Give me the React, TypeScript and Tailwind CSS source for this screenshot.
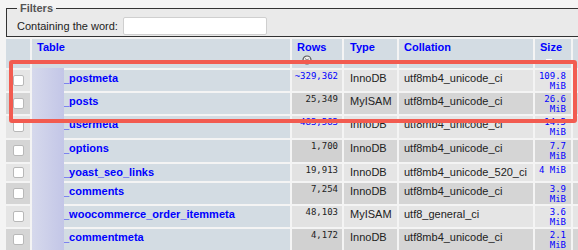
import React from 'react';

type Row = {
  name: string;
  rows: string;
  approx?: boolean;
  type: string;
  collation: string;
  size: string[];
  h: string;
};

const ROWS: Row[] = [
  { name: '_postmeta', rows: '~329,362', approx: true, type: 'InnoDB', collation: 'utf8mb4_unicode_ci', size: ['109.8', 'MiB'], h: 'h-[21px]' },
  { name: '_posts', rows: '25,349', type: 'MyISAM', collation: 'utf8mb4_unicode_ci', size: ['26.6', 'MiB'], h: 'h-[21px]' },
  { name: '_usermeta', rows: '~483,583', approx: true, type: 'InnoDB', collation: 'utf8mb4_unicode_ci', size: ['14.5', 'MiB'], h: 'h-[22px]' },
  { name: '_options', rows: '1,700', type: 'InnoDB', collation: 'utf8mb4_unicode_ci', size: ['7.7', 'MiB'], h: 'h-[22px]' },
  { name: '_yoast_seo_links', rows: '19,913', type: 'InnoDB', collation: 'utf8mb4_unicode_520_ci', size: ['4 MiB'], h: 'h-[17px]' },
  { name: '_comments', rows: '7,254', type: 'InnoDB', collation: 'utf8mb4_unicode_ci', size: ['3.9', 'MiB'], h: 'h-[21px]' },
  { name: '_woocommerce_order_itemmeta', rows: '48,103', type: 'MyISAM', collation: 'utf8_general_ci', size: ['3.6', 'MiB'], h: 'h-[21px]' },
  { name: '_commentmeta', rows: '4,172', type: 'InnoDB', collation: 'utf8mb4_unicode_ci', size: ['2.1', 'MiB'], h: 'h-[21px]' },
];

const SortIcon = () => (
  <svg className="block w-[10px] h-[10px]" viewBox="0 0 10 10">
    <circle cx="5" cy="5" r="4" fill="#f2f2f2" stroke="#555" strokeWidth="1.2" />
    <path d="M3.2 3.6 L5 5.4 L6.8 3.6 M3.2 5.6 L5 7.4 L6.8 5.6" fill="none" stroke="#555" strokeWidth="1" />
  </svg>
);

const mono = "font-['DejaVu_Sans_Mono','Liberation_Mono',monospace] text-[9px] leading-[10px]";

export default function App() {
  return (
    <div className="relative w-[578px] h-[250px] overflow-hidden bg-[#f4f4f4] font-['Liberation_Sans',Arial,sans-serif] text-[11px] leading-[13px] text-[#222]">
      {/* filter box */}
      <fieldset className="mt-[2px] ml-[6px] w-[640px] border border-[#333] bg-[#eaeaea] px-[10px] pt-[2px] pb-[1px]">
        <legend className="px-[3px] font-bold text-[#555]">Filters</legend>
        <div className="flex items-center gap-[5px]">
          <span>Containing the word:</span>
          <span className="block w-[144px] h-[18px] bg-white border border-[#cfcfcf] rounded-[2px]" />
        </div>
      </fieldset>

      {/* tables list */}
      <table className="ml-[4px] w-[612px] table-fixed border-separate border-spacing-[2px]">
        <colgroup>
          <col className="w-[24px]" />
          <col className="w-[258px]" />
          <col className="w-[50px]" />
          <col className="w-[53px]" />
          <col className="w-[134px]" />
          <col className="w-[36px]" />
          <col className="w-[43px]" />
        </colgroup>
        <thead>
          <tr className="bg-[#d3dce3] text-[#0000ff] font-bold align-top text-left">
            <th className="h-[29px] p-0" />
            <th className="px-[5px] pt-[2px]">Table</th>
            <th className="px-[5px] pt-[2px]">
              Rows
              <div className="ml-[5px] mt-[1px]"><SortIcon /></div>
            </th>
            <th className="px-[6px] pt-[2px]">Type</th>
            <th className="px-[5px] pt-[2px]">Collation</th>
            <th className="px-[5px] pt-[2px]">
              Size
              <div className="ml-[6px] mt-[5px] w-[6px] h-[3px] bg-white" />
            </th>
            <th />
          </tr>
        </thead>
        <tbody>
          {ROWS.map((r, i) => {
            const odd = i % 2 === 0;
            const bg = odd ? 'bg-[#e5e5e5]' : 'bg-[#d5d5d5]';
            return (
              <tr key={r.name} className="align-top">
                <td className={`${bg} ${r.h} p-0 align-middle`}>
                  <span className="block mx-auto -mt-[1px] w-[11px] h-[11px] bg-white border border-[#b8b8b8] rounded-[2px]" />
                </td>
                <th className={`${r.h} bg-[#d3dce3] pl-[31px] pt-[2px] text-left font-bold text-[#0000ff] whitespace-nowrap`}>
                  {r.name}
                </th>
                <td className={`${odd ? 'bg-[#e2e2e2]' : 'bg-[#d1d1d1]'} ${r.h} pr-[4px] pt-[1px] text-right ${mono} ${r.approx ? 'text-[#0000ff]' : 'text-[#222]'}`}>
                  {r.rows}
                </td>
                <td className={`${bg} ${r.h} px-[6px] pt-[2px]`}>{r.type}</td>
                <td className={`${bg} ${r.h} px-[5px] pt-[2px] whitespace-nowrap`}>{r.collation}</td>
                <td className={`${bg} ${r.h} pr-[5px] pt-[1px] text-right ${mono} text-[#0000ff] whitespace-nowrap`}>
                  {r.size.map((s) => (
                    <div key={s}>{s}</div>
                  ))}
                </td>
                <td className={`${bg} ${r.h}`} />
              </tr>
            );
          })}
        </tbody>
      </table>

      {/* redacted prefix */}
      <div className="absolute left-[32px] top-[68px] w-[32px] h-[182px] bg-gradient-to-r from-[#d6d9ec] to-[#c3c6e7]" />

      {/* highlight box */}
      <div className="absolute left-[9px] top-[60px] w-[568px] h-[63px] border-[4px] border-[#f25b50] rounded-[3px]" />
    </div>
  );
}
